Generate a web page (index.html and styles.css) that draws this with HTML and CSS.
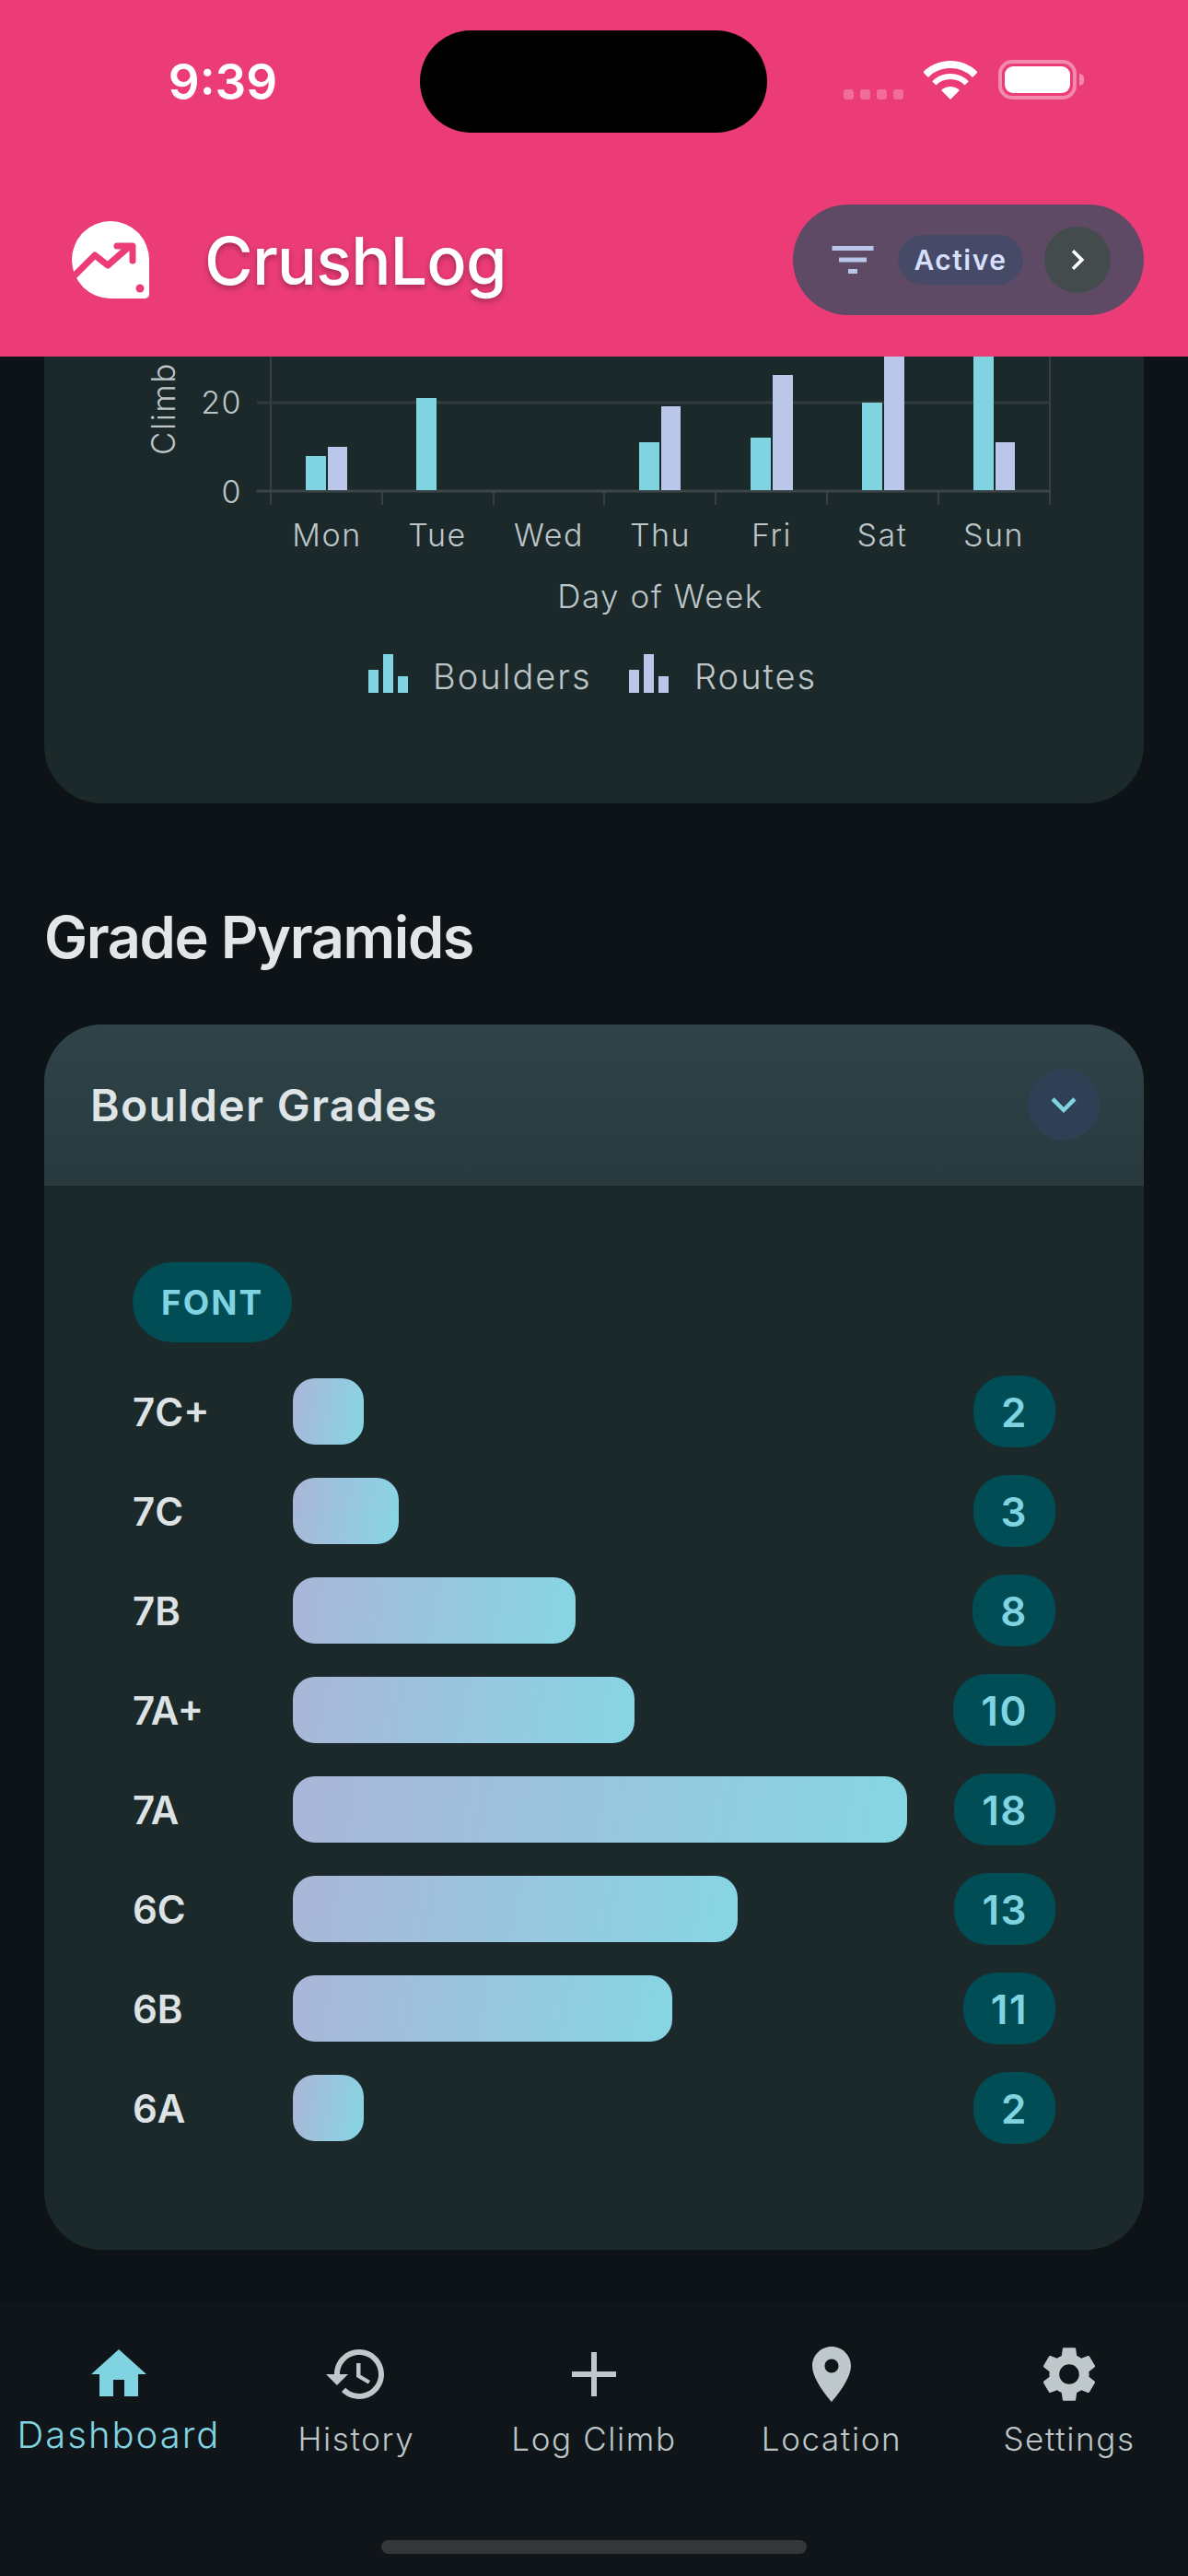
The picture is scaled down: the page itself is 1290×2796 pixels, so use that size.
FILE: index.html
```html
<!DOCTYPE html>
<html lang="en">
<head>
    <meta charset="UTF-8">
    <meta name="viewport" content="width=device-width, initial-scale=1.0">
    <title>CrushLog</title>
    <link rel="stylesheet" href="styles.css">
</head>
<body>

    <header class="top">
        <div class="status-bar">
            <div class="status-left"><span class="time">9:39</span></div>
            <div class="notch"></div>
            <div class="status-right">
                <div class="signal"><i></i><i></i><i></i><i></i></div>
                <svg class="wifi" viewBox="0 0 58 42" fill="none" stroke="#fff">
                    <path d="M2.1 15.1A38 38 0 0 1 55.9 15.1" stroke-width="8"/>
                    <path d="M11.3 24.3A25 25 0 0 1 46.7 24.3" stroke-width="6"/>
                    <path d="M29 42 19.1 32.1A14 14 0 0 1 38.9 32.1Z" fill="#fff" stroke="none"/>
                </svg>
                <div class="battery"><div class="battery-fill"></div></div>
                <div class="battery-nub"></div>
            </div>
        </div>
        <div class="app-bar">
            <svg class="logo" viewBox="0 0 84 84">
                <path d="M42 0A42 42 0 0 1 84 42V78A5 5 0 0 1 79 84H42A42 42 0 0 1 0 42 42 42 0 0 1 42 0Z" fill="#fff"/>
                <path d="M2 60 25 37 39 48 63 27" fill="none" stroke="#eb3c78" stroke-width="7" stroke-linejoin="round"/>
                <path d="M49 27H66V43" fill="none" stroke="#eb3c78" stroke-width="7" stroke-linecap="round" stroke-linejoin="round"/>
                <circle cx="74" cy="73" r="4.5" fill="#eb3c78"/>
            </svg>
            <h1 class="app-title">CrushLog</h1>
            <div class="filter-pill">
                <svg class="filter-icon" viewBox="0 0 24 24"><path d="M10 18h4v-2h-4v2zM3 6v2h18V6H3zm3 7h12v-2H6v2z"/></svg>
                <span class="active-chip">Active</span>
                <span class="round-btn">
                    <svg viewBox="0 0 24 24"><path d="M10 6 8.59 7.41 13.17 12l-4.58 4.59L10 18l6-6z"/></svg>
                </span>
            </div>
        </div>
    </header>

    <main class="content">
        <section class="card chart-card">
            <svg class="chart" viewBox="48 387 1194 485">
                <!-- axes -->
                <path class="axis-thin" d="M294 387V548M1140 387V548M415 533V548M536 533V548M656 533V548M777 533V548M898 533V548M1019 533V548"/>
                <path class="axis-grid" d="M279 437H1140"/>
                <path class="axis-base" d="M279 533H1140"/>

                <!-- bars -->
                <g class="bar-a">
                    <rect x="332" y="495" width="22" height="37"/>
                    <rect x="452" y="432" width="22" height="100"/>
                    <rect x="694" y="480" width="22" height="52"/>
                    <rect x="815" y="475" width="22" height="57"/>
                    <rect x="936" y="437" width="22" height="95"/>
                    <rect x="1057" y="380" width="22" height="152"/>
                </g>
                <g class="bar-b">
                    <rect x="356" y="485" width="21" height="47"/>
                    <rect x="718" y="441" width="21" height="91"/>
                    <rect x="839" y="407" width="22" height="125"/>
                    <rect x="960" y="380" width="22" height="152"/>
                    <rect x="1081" y="480" width="21" height="52"/>
                </g>

                <g class="tick-label tick-y">
                    <text x="263" y="449">20</text>
                    <text x="263" y="546">0</text>
                </g>
                <g class="tick-label tick-x">
                    <text x="355" y="593">Mon</text>
                    <text x="475" y="593">Tue</text>
                    <text x="596" y="593">Wed</text>
                    <text x="717" y="593">Thu</text>
                    <text x="838" y="593">Fri</text>
                    <text x="958" y="593">Sat</text>
                    <text x="1079" y="593">Sun</text>
                </g>
                <text class="tick-label tick-x axis-name" x="717" y="660">Day of Week</text>
                <text class="tick-label climb-label" transform="translate(190 494) rotate(-90)">Climb</text>

                <!-- legend -->
                <g class="bar-a">
                    <rect x="400" y="727" width="11" height="25"/>
                    <rect x="416" y="710" width="11" height="42"/>
                    <rect x="432" y="734" width="11" height="18"/>
                </g>
                <text class="tick-label legend-label" x="470" y="748">Boulders</text>
                <g class="bar-b">
                    <rect x="683" y="727" width="11" height="25"/>
                    <rect x="699" y="710" width="11" height="42"/>
                    <rect x="715" y="734" width="11" height="18"/>
                </g>
                <text class="tick-label legend-label" x="754" y="748">Routes</text>
            </svg>
        </section>

        <h2 class="section-title">Grade Pyramids</h2>

        <section class="card grades-card">
            <div class="grades-head">
                <span class="grades-title">Boulder Grades</span>
                <span class="expand-btn">
                    <svg viewBox="0 0 24 24"><path d="M16.59 8.59 12 13.17 7.41 8.59 6 10l6 6 6-6z"/></svg>
                </span>
            </div>
            <div class="grades-body">
                <span class="scale-chip">FONT</span>
                <div class="grade-list">
                    <div class="grade-row">
                        <span class="grade-name">7C+</span>
                        <div class="grade-track"><div class="grade-bar" style="width: 77px"></div></div>
                        <span class="grade-count">2</span>
                    </div>
                    <div class="grade-row">
                        <span class="grade-name">7C</span>
                        <div class="grade-track"><div class="grade-bar" style="width: 115px"></div></div>
                        <span class="grade-count">3</span>
                    </div>
                    <div class="grade-row">
                        <span class="grade-name">7B</span>
                        <div class="grade-track"><div class="grade-bar" style="width: 307px"></div></div>
                        <span class="grade-count">8</span>
                    </div>
                    <div class="grade-row">
                        <span class="grade-name">7A+</span>
                        <div class="grade-track"><div class="grade-bar" style="width: 371px"></div></div>
                        <span class="grade-count">10</span>
                    </div>
                    <div class="grade-row">
                        <span class="grade-name">7A</span>
                        <div class="grade-track"><div class="grade-bar" style="width: 667px"></div></div>
                        <span class="grade-count">18</span>
                    </div>
                    <div class="grade-row">
                        <span class="grade-name">6C</span>
                        <div class="grade-track"><div class="grade-bar" style="width: 483px"></div></div>
                        <span class="grade-count">13</span>
                    </div>
                    <div class="grade-row">
                        <span class="grade-name">6B</span>
                        <div class="grade-track"><div class="grade-bar" style="width: 412px"></div></div>
                        <span class="grade-count">11</span>
                    </div>
                    <div class="grade-row">
                        <span class="grade-name">6A</span>
                        <div class="grade-track"><div class="grade-bar" style="width: 77px"></div></div>
                        <span class="grade-count">2</span>
                    </div>
                </div>
            </div>
        </section>
    </main>

    <nav class="tabs">
        <div class="tab-row">
            <a class="tab active">
                <svg viewBox="0 0 24 24"><path d="M10 20v-6h4v6h5v-8h3L12 3 2 12h3v8z"/></svg>
                <span>Dashboard</span>
            </a>
            <a class="tab">
                <svg viewBox="0 0 24 24"><path d="M13 3c-4.97 0-9 4.03-9 9H1l3.89 3.89.07.14L9 12H6c0-3.87 3.13-7 7-7s7 3.13 7 7-3.13 7-7 7c-1.93 0-3.68-.79-4.94-2.06l-1.42 1.42C8.27 19.99 10.51 21 13 21c4.97 0 9-4.03 9-9s-4.03-9-9-9zm-1 5v5l4.28 2.54.72-1.21-3.5-2.08V8H12z"/></svg>
                <span>History</span>
            </a>
            <a class="tab">
                <svg viewBox="0 0 24 24"><path d="M20 13h-7v7h-2v-7H4v-2h7V4h2v7h7v2z"/></svg>
                <span>Log Climb</span>
            </a>
            <a class="tab">
                <svg viewBox="0 0 24 24"><path d="M12 2C8.13 2 5 5.13 5 9c0 5.25 7 13 7 13s7-7.75 7-13c0-3.87-3.13-7-7-7zm0 9.5c-1.38 0-2.5-1.12-2.5-2.5s1.12-2.5 2.5-2.5 2.5 1.12 2.5 2.5-1.12 2.5-2.5 2.5z"/></svg>
                <span>Location</span>
            </a>
            <a class="tab">
                <svg viewBox="0 0 24 24"><path d="M19.14 12.94c.04-.3.06-.61.06-.94 0-.32-.02-.64-.07-.94l2.03-1.58c.18-.14.23-.41.12-.61l-1.92-3.32c-.12-.22-.37-.29-.59-.22l-2.39.96c-.5-.38-1.03-.7-1.62-.94l-.36-2.54c-.04-.24-.24-.41-.48-.41h-3.84c-.24 0-.43.17-.47.41l-.36 2.54c-.59.24-1.13.57-1.62.94l-2.39-.96c-.22-.08-.47 0-.59.22L2.74 8.87c-.12.21-.08.47.12.61l2.03 1.58c-.05.3-.09.63-.09.94s.02.64.07.94l-2.03 1.58c-.18.14-.23.41-.12.61l1.92 3.32c.12.22.37.29.59.22l2.39-.96c.5.38 1.03.7 1.62.94l.36 2.54c.05.24.24.41.48.41h3.84c.24 0 .44-.17.47-.41l.36-2.54c.59-.24 1.13-.56 1.62-.94l2.39.96c.22.08.47 0 .59-.22l1.92-3.32c.12-.22.07-.47-.12-.61l-2.01-1.58zM12 15.6c-1.98 0-3.6-1.62-3.6-3.6s1.62-3.6 3.6-3.6 3.6 1.62 3.6 3.6-1.62 3.6-3.6 3.6z"/></svg>
                <span>Settings</span>
            </a>
        </div>
        <div class="home-bar"></div>
    </nav>

</body>
</html>
```

FILE: styles.css
```css
body {
    font-family: Inter, "Noto Sans", sans-serif;
    margin: 0;
    width: 1290px;
    height: 2796px;
    display: flex;
    flex-direction: column;
    overflow: hidden;
    background-color: #0d1316;
}

/* status bar + app bar */
.top {
    background-color: #eb3c78;
    height: 387px;
    flex-shrink: 0;
}

.status-bar {
    display: flex;
    height: 144px;
    padding-top: 33px;
}

.status-left {
    width: 456px;
    text-align: center;
    padding-top: 24px;
    box-sizing: border-box;
    padding-left: 28px;
}

.time {
    color: #fff;
    font-size: 53px;
    line-height: 64px;
    font-weight: 600;
}

.notch {
    width: 377px;
    height: 111px;
    background-color: #000;
    border-radius: 56px;
}

.status-right {
    display: flex;
    align-items: flex-end;
    height: 75px;
    padding-left: 83px;
}

.signal {
    display: flex;
    gap: 7px;
}

.signal i {
    display: block;
    width: 11px;
    height: 11px;
    border-radius: 3px;
    background-color: rgba(255, 255, 255, 0.25);
}

.wifi {
    width: 58px;
    height: 42px;
    margin-left: 22px;
}

.battery {
    width: 85px;
    height: 43px;
    box-sizing: border-box;
    margin-left: 23px;
    padding: 3px;
    border: 4px solid rgba(255, 255, 255, 0.4);
    border-radius: 15px;
}

.battery-fill {
    height: 100%;
    background-color: #fff;
    border-radius: 9px;
}

.battery-nub {
    width: 5px;
    height: 13px;
    margin: 0 0 15px 3px;
    background-color: rgba(255, 255, 255, 0.4);
    border-radius: 0 6px 6px 0;
}

.app-bar {
    display: flex;
    align-items: center;
    height: 210px;
    padding: 0 48px 0 78px;
    box-sizing: border-box;
}

.logo {
    width: 84px;
    height: 84px;
}

.app-title {
    margin: 0 0 0 60px;
    color: #fff;
    font-size: 72px;
    font-weight: 500;
    letter-spacing: -0.9px;
    text-shadow: 0 3px 6px rgba(0, 0, 0, 0.3);
}

.filter-pill {
    display: flex;
    align-items: center;
    height: 120px;
    margin-left: auto;
    padding: 0 36px 0 35px;
    box-sizing: border-box;
    border-radius: 60px;
    background-color: #5e4a64;
}

.filter-icon {
    width: 60px;
    height: 60px;
    fill: #b9c6ea;
}

.active-chip {
    height: 54px;
    line-height: 54px;
    margin-left: 19px;
    padding: 0 17.5px;
    border-radius: 27px;
    background-color: #474a67;
    color: #d6dffb;
    font-size: 30px;
    font-weight: 600;
    letter-spacing: 1.5px;
}

.round-btn {
    display: flex;
    align-items: center;
    justify-content: center;
    width: 72px;
    height: 72px;
    margin-left: 23px;
    border-radius: 50%;
    background-color: #434b4d;
}

.round-btn svg {
    width: 44px;
    height: 44px;
    fill: #fff;
}

/* scrolled content */
.content {
    flex: 1;
    padding: 0 48px;
    overflow: hidden;
}

.card {
    background-color: #1c292b;
    border-radius: 63px;
    overflow: hidden;
}

.chart-card {
    height: 485px;
    border-radius: 0 0 63px 63px;
}

.chart {
    display: block;
    width: 1194px;
    height: 485px;
}

.axis-thin {
    fill: none;
    stroke: #354042;
    stroke-width: 2;
}

.axis-grid {
    fill: none;
    stroke: #303c3e;
    stroke-width: 3;
}

.axis-base {
    fill: none;
    stroke: #3c4648;
    stroke-width: 3;
}

.bar-a {
    fill: #80d4e1;
}

.bar-b {
    fill: #bac6ea;
}

.tick-label {
    fill: #bcc6c8;
    font-weight: 300;
    font-size: 34px;
    letter-spacing: 1.5px;
}

.tick-y {
    text-anchor: end;
}

.tick-x {
    text-anchor: middle;
}

.axis-name {
    font-size: 35px;
}

.climb-label {
    font-size: 35px;
}

.legend-label {
    font-size: 38px;
    letter-spacing: 2px;
}

.section-title {
    margin: 109px 0 59px;
    color: #e2e6e8;
    font-size: 63px;
    line-height: 72px;
    font-weight: 600;
    letter-spacing: -1.4px;
}

.grades-head {
    display: flex;
    align-items: center;
    justify-content: space-between;
    height: 175px;
    padding: 0 48px 0 50px;
    box-sizing: border-box;
    background: linear-gradient(180deg, #2f4348, #283a3e);
    border-bottom: 2px solid #2a3b3e;
}

.grades-title {
    padding-top: 2px;
    color: #dfe4e6;
    font-size: 48px;
    font-weight: 600;
    letter-spacing: 1.3px;
}

.expand-btn {
    display: flex;
    align-items: center;
    justify-content: center;
    width: 78px;
    height: 78px;
    border-radius: 50%;
    background-color: #304054;
}

.expand-btn svg {
    width: 54px;
    height: 54px;
    fill: #80d4e1;
}

.grades-body {
    padding: 83px 96px 115px 96px;
}

.scale-chip {
    display: inline-block;
    height: 87px;
    line-height: 87px;
    padding: 0 31px;
    border-radius: 44px;
    background-color: #004d55;
    color: #80d4e1;
    font-size: 37px;
    font-weight: 700;
    letter-spacing: 2px;
}

.grade-list {
    display: flex;
    flex-direction: column;
    gap: 30px;
    margin-top: 36px;
}

.grade-row {
    display: flex;
    align-items: center;
    height: 78px;
}

.grade-name {
    width: 174px;
    color: #dde3e5;
    font-size: 42px;
    font-weight: 600;
}

.grade-track {
    flex: 1;
}

.grade-bar {
    height: 72px;
    border-radius: 24px;
    background: linear-gradient(100deg, #aab6d8, #86d6e3);
}

.grade-count {
    height: 78px;
    line-height: 80px;
    padding: 0 30px;
    border-radius: 36px;
    background-color: #004d55;
    color: #80d4e1;
    font-size: 44px;
    font-weight: 600;
    letter-spacing: 1.5px;
}

/* bottom tabs */
.tabs {
    display: flex;
    flex-direction: column;
    align-items: center;
    height: 296px;
    flex-shrink: 0;
    background-color: #0f1518;
}

.tab-row {
    display: flex;
    width: 100%;
    padding-top: 41px;
}

.tab {
    flex: 1;
    display: flex;
    flex-direction: column;
    align-items: center;
    color: #bcc6c8;
    font-size: 35px;
    line-height: 48px;
    font-weight: 300;
    letter-spacing: 1.6px;
    white-space: nowrap;
}

.tab svg {
    width: 72px;
    height: 72px;
    fill: #bfc8cb;
    margin-bottom: 10px;
}

.tab.active {
    color: #80d4e1;
    font-size: 40px;
    letter-spacing: 2px;
}

.tab.active svg {
    fill: #80d4e1;
    margin-bottom: 6px;
}

.home-bar {
    width: 462px;
    height: 15px;
    margin-top: auto;
    margin-bottom: 24px;
    border-radius: 8px;
    background-color: #343738;
}
```
